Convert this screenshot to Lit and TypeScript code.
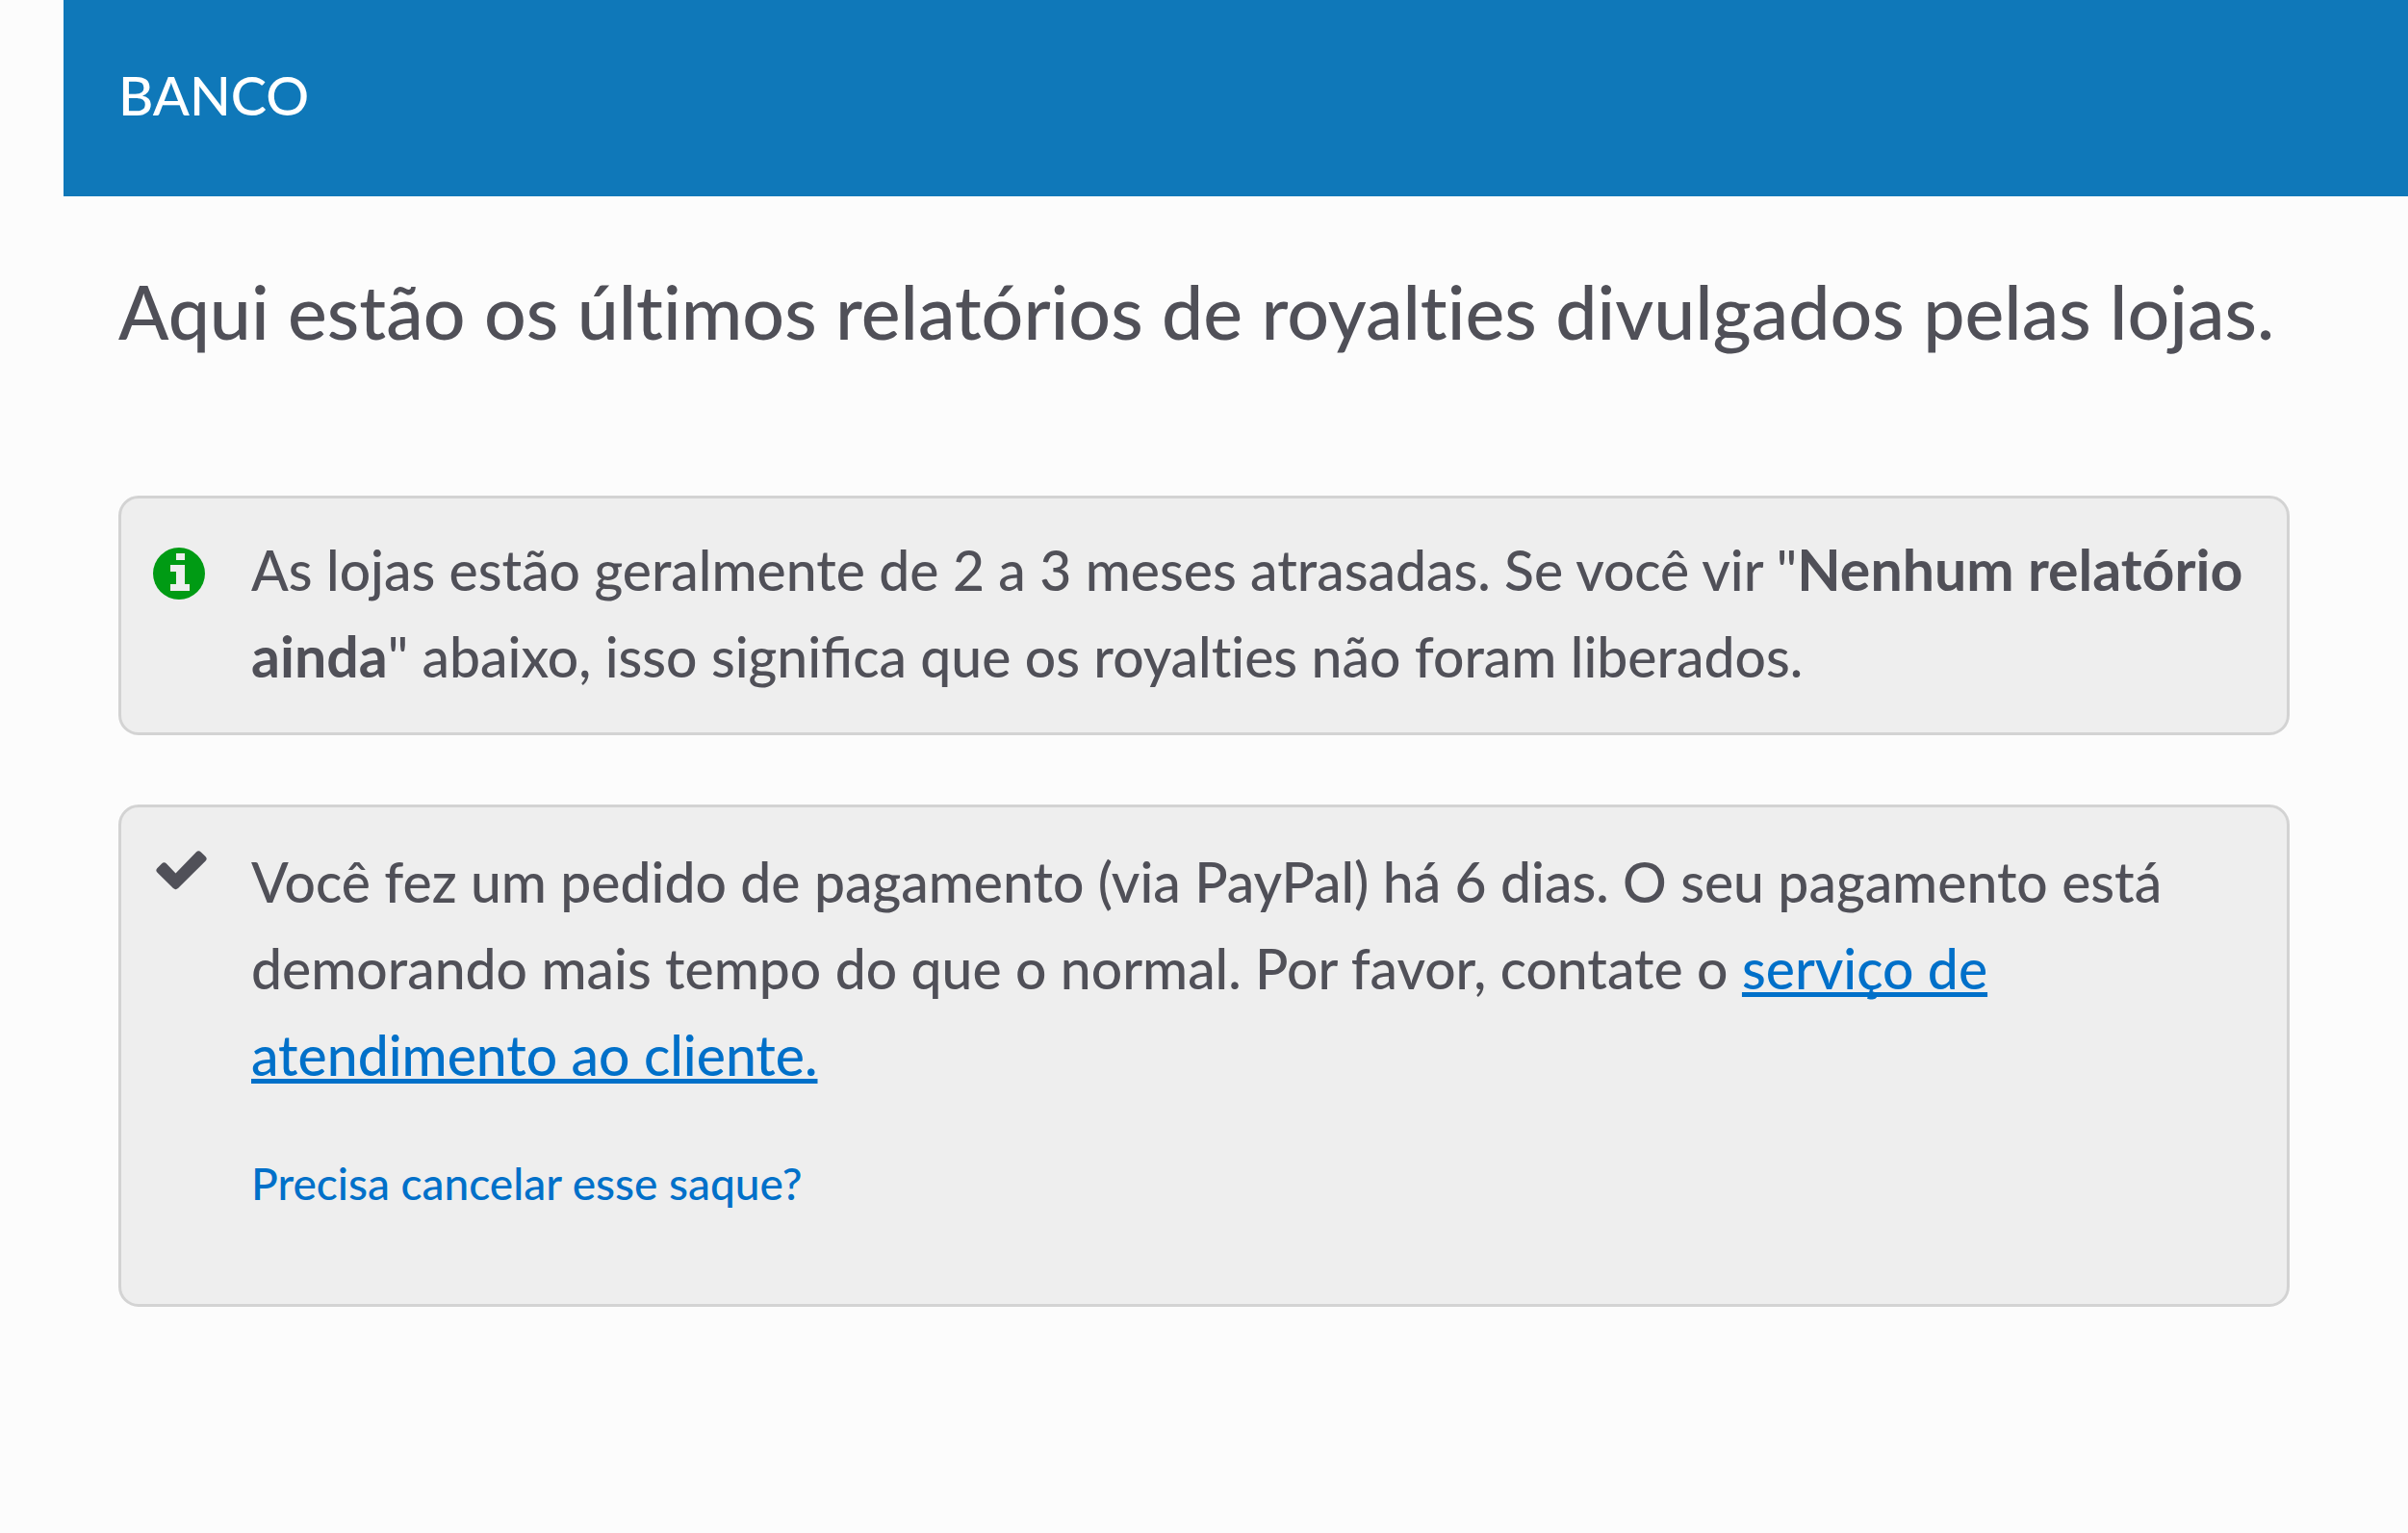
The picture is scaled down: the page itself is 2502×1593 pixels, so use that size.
import { LitElement, html, css } from "lit";
import { customElement } from "lit/decorators.js";

@customElement("app-root")
export class AppRoot extends LitElement {
  static styles = css`
    :host {
      display: block;
      min-height: 100vh;
      background: #fcfcfc;
      color: #505058;
      font-family: Lato, "Liberation Sans", sans-serif;
      font-size: 57px;
      font-weight: 500;
      line-height: 90px;
    }
    .header {
      box-sizing: border-box;
      margin-left: 66px;
      height: 204px;
      padding: 54px 57px;
      background: #0f78b9;
      color: #fff;
    }
    .title {
      margin: 0;
      font-size: 56px;
      line-height: 90px;
      font-weight: 500;
    }
    .main {
      display: flex;
      flex-direction: column;
      gap: 72px;
      padding: 61px 123px 72px;
    }
    .intro {
      margin: 0 0 61px;
      font-size: 77px;
      line-height: 117px;
      font-weight: 500;
    }
    .intro,
    .plain {
      font-variant-ligatures: none;
    }
    .notice {
      display: flex;
      gap: 47px;
      padding: 29px 32px 34px;
      border: 3px solid #d3d3d3;
      border-radius: 21px;
      background: #eee;
    }
    .request {
      padding: 32px 32px 89px;
    }
    .icon {
      display: block;
      flex: none;
      width: 56px;
      height: 54px;
      margin-top: 22px;
      overflow: visible;
    }
    .check {
      margin-top: 11px;
    }
    .body {
      flex: 1;
      min-width: 0;
    }
    .text {
      margin: 0;
    }
    .strong {
      font-size: 59px;
      line-height: 1;
    }
    a {
      color: #0070c9;
      text-decoration: none;
    }
    .support {
      text-decoration: underline;
      text-decoration-skip-ink: none;
    }
    .cancel {
      margin: 53px 0 0;
      font-size: 46px;
      line-height: 72px;
    }
  `;

  render() {
    return html`
      <header class="header"><h1 class="title">BANCO</h1></header>
      <main class="main">
        <h2 class="intro">Aqui estão os últimos relatórios de royalties divulgados pelas lojas.</h2>
        <section class="notice">
          <svg class="icon" viewBox="0 0 56 54" aria-hidden="true">
            <circle cx="28" cy="27" r="27" fill="#009b14" />
            <path d="M25 6h9v7h-9zM19 18h15v20h5v7H19v-7h6V25h-6z" fill="#eee" />
          </svg>
          <div class="body">
            <p class="text">As lojas estão geralmente de 2 a 3 meses atrasadas. Se você vir "<b class="strong">Nenhum relatório ainda</b>" abaixo, isso significa que os <span class="plain">royalties</span> não foram liberados.</p>
          </div>
        </section>
        <section class="notice request">
          <svg class="icon check" viewBox="0 0 56 54" aria-hidden="true">
            <path d="M5.500 20L10 15.500q2.500-2.300 5 0L24.500 25.500 45.800 3.500q2.500-2.400 5 0L55.500 8q2.400 2.400 0 4.800L27 41q-2.500 2.300-5 0L5.500 24.800q-2.400-2.400 0-4.800z" fill="#505058" />
          </svg>
          <div class="body">
            <p class="text">Você fez um pedido de pagamento (via PayPal) há 6 dias. O seu pagamento está demorando mais tempo do que o normal. Por favor, contate o <a class="support" href="#atendimento">serviço de atendimento ao cliente.</a></p>
            <p class="cancel"><a href="#cancelar">Precisa cancelar esse saque?</a></p>
          </div>
        </section>
      </main>
    `;
  }
}
